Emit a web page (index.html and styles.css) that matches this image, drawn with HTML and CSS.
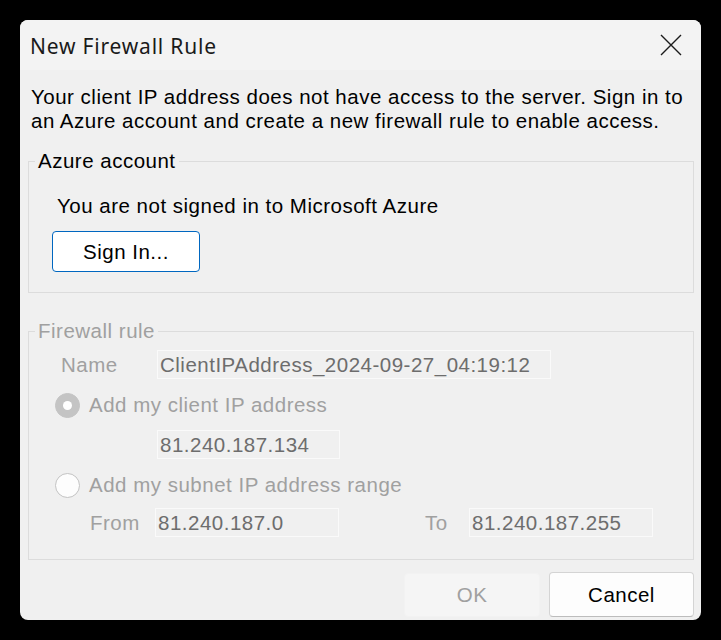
FILE: index.html
```html
<!DOCTYPE html>
<html>
<head>
<meta charset="utf-8">
<link rel="stylesheet" href="styles.css">
</head>
<body>
<div class="dialog">
  <div class="titlebar">
    <span class="title">New Firewall Rule</span>
    <span class="close">
      <svg width="22" height="22" viewBox="0 0 22 22"><path d="M1 1 L21 21 M21 1 L1 21" stroke="#1b1b1b" stroke-width="1.4" fill="none"/></svg>
    </span>
  </div>
  <div class="content">
    <p class="intro">Your client IP address does not have access to the server. Sign in to an Azure account and create a new firewall rule to enable access.</p>
    <fieldset class="group">
      <legend>Azure account</legend>
      <div class="signed">You are not signed in to Microsoft Azure</div>
      <button class="btn-sign">Sign In...</button>
    </fieldset>
    <fieldset class="group disabled">
      <legend>Firewall rule</legend>
      <div class="row name-row">
        <span class="label name-label">Name</span>
        <span class="input name-input">ClientIPAddress_2024-09-27_04:19:12</span>
      </div>
      <div class="radio-row first">
        <span class="radio checked"></span>
        <span class="radio-label">Add my client IP address</span>
      </div>
      <div class="row ip-row">
        <span class="input ip-input">81.240.187.134</span>
      </div>
      <div class="radio-row second">
        <span class="radio"></span>
        <span class="radio-label">Add my subnet IP address range</span>
      </div>
      <div class="row range-row">
        <span class="label from-label">From</span>
        <span class="input range-input">81.240.187.0</span>
        <span class="label to-label">To</span>
        <span class="input range-input">81.240.187.255</span>
      </div>
    </fieldset>
    <div class="buttons">
      <button class="btn ok">OK</button>
      <button class="btn cancel">Cancel</button>
    </div>
  </div>
</div>
</body>
</html>
```
FILE: styles.css
```css
html, body {
  margin: 0;
  padding: 0;
  background: #000;
}
body {
  padding: 20px;
  font-family: "Liberation Sans", Arial, sans-serif;
}
.dialog {
  width: 681px;
  height: 600px;
  background: #f0f0f0;
  border-radius: 8px;
  overflow: hidden;
  display: flex;
  flex-direction: column;
  font-size: 20.5px;
  letter-spacing: 0.5px;
}
.titlebar {
  height: 50px;
  flex: none;
  background: #f3f3f3;
  display: flex;
  align-items: center;
  justify-content: space-between;
  padding: 0 19px 0 10px;
}
.title {
  font-family: "Noto Sans", "Open Sans", sans-serif;
  font-size: 21px;
  letter-spacing: 0.8px;
  color: #1a1a1a;
  padding-top: 1px;
}
.close {
  display: flex;
  width: 22px;
  height: 22px;
}
.content {
  display: flex;
  flex-direction: column;
  padding: 15px 7px 0 8px;
  flex: 1;
}
.intro {
  margin: 0 0 17px 3px;
  line-height: 24px;
  color: #000;
}
.group {
  margin: 0;
  padding: 0 0 20px 0;
  border: 1px solid #dcdcdc;
  display: flex;
  flex-direction: column;
  align-items: flex-start;
}
.group legend {
  margin-left: 6px;
  padding: 0 3px;
  line-height: 22px;
  color: #000;
}
.signed {
  margin: 22px 0 0 28px;
  line-height: 24px;
}
.btn-sign {
  margin: 13px 0 0 23px;
  width: 148px;
  height: 41px;
  background: #fff;
  border: 1px solid #0067c0;
  border-radius: 4px;
  font-family: inherit;
  font-size: inherit;
  letter-spacing: inherit;
  color: #000;
  padding: 0;
}
.group.disabled {
  margin-top: 27px;
  padding-bottom: 22px;
}
.group.disabled legend {
  color: #a0a0a0;
}
.row {
  display: flex;
  align-items: center;
}
.label {
  color: #a0a0a0;
}
.input {
  box-sizing: border-box;
  height: 29px;
  border: 1px solid #fafafa;
  background: #f0f0f0;
  color: #6d6d6d;
  padding: 0 0 0 2px;
  display: flex;
  align-items: center;
  white-space: nowrap;
}
.name-row {
  margin-top: 8px;
}
.name-label {
  margin-left: 32px;
  width: 96px;
}
.name-input {
  width: 394px;
}
.radio-row {
  display: flex;
  align-items: center;
  margin-left: 26px;
  height: 26px;
}
.radio-row.first {
  margin-top: 13px;
}
.radio-row.second {
  margin-top: 13px;
}
.radio {
  box-sizing: border-box;
  width: 25px;
  height: 25px;
  border-radius: 50%;
  border: 1px solid #c3c3c3;
  background: #fdfdfd;
  margin-right: 9px;
}
.radio.checked {
  background: #c4c4c4;
  border-color: #c4c4c4;
  position: relative;
}
.radio.checked::after {
  content: "";
  position: absolute;
  left: 7px;
  top: 7px;
  width: 9px;
  height: 9px;
  border-radius: 50%;
  background: #fff;
}
.radio-label {
  color: #a0a0a0;
}
.ip-row {
  margin-top: 12px;
  padding-left: 128px;
}
.ip-input {
  width: 183px;
}
.range-row {
  margin-top: 10px;
}
.from-label {
  margin-left: 61px;
  width: 65px;
}
.range-input {
  width: 184px;
}
.to-label {
  margin-left: 86px;
  width: 44px;
}
.buttons {
  display: flex;
  justify-content: flex-end;
  gap: 9px;
  margin-top: 12px;
}
.btn {
  height: 45px;
  border-radius: 4px;
  font-family: inherit;
  font-size: inherit;
  letter-spacing: inherit;
  padding: 0;
}
.ok {
  width: 136px;
  background: #f5f5f5;
  border: 1px solid #f2f2f2;
  color: #a0a0a0;
  margin-top: 1px;
  height: 44px;
}
.cancel {
  width: 145px;
  background: #fdfdfd;
  border: 1px solid #d4d4d4;
  border-bottom-color: #bcbcbc;
  color: #000;
}
```
